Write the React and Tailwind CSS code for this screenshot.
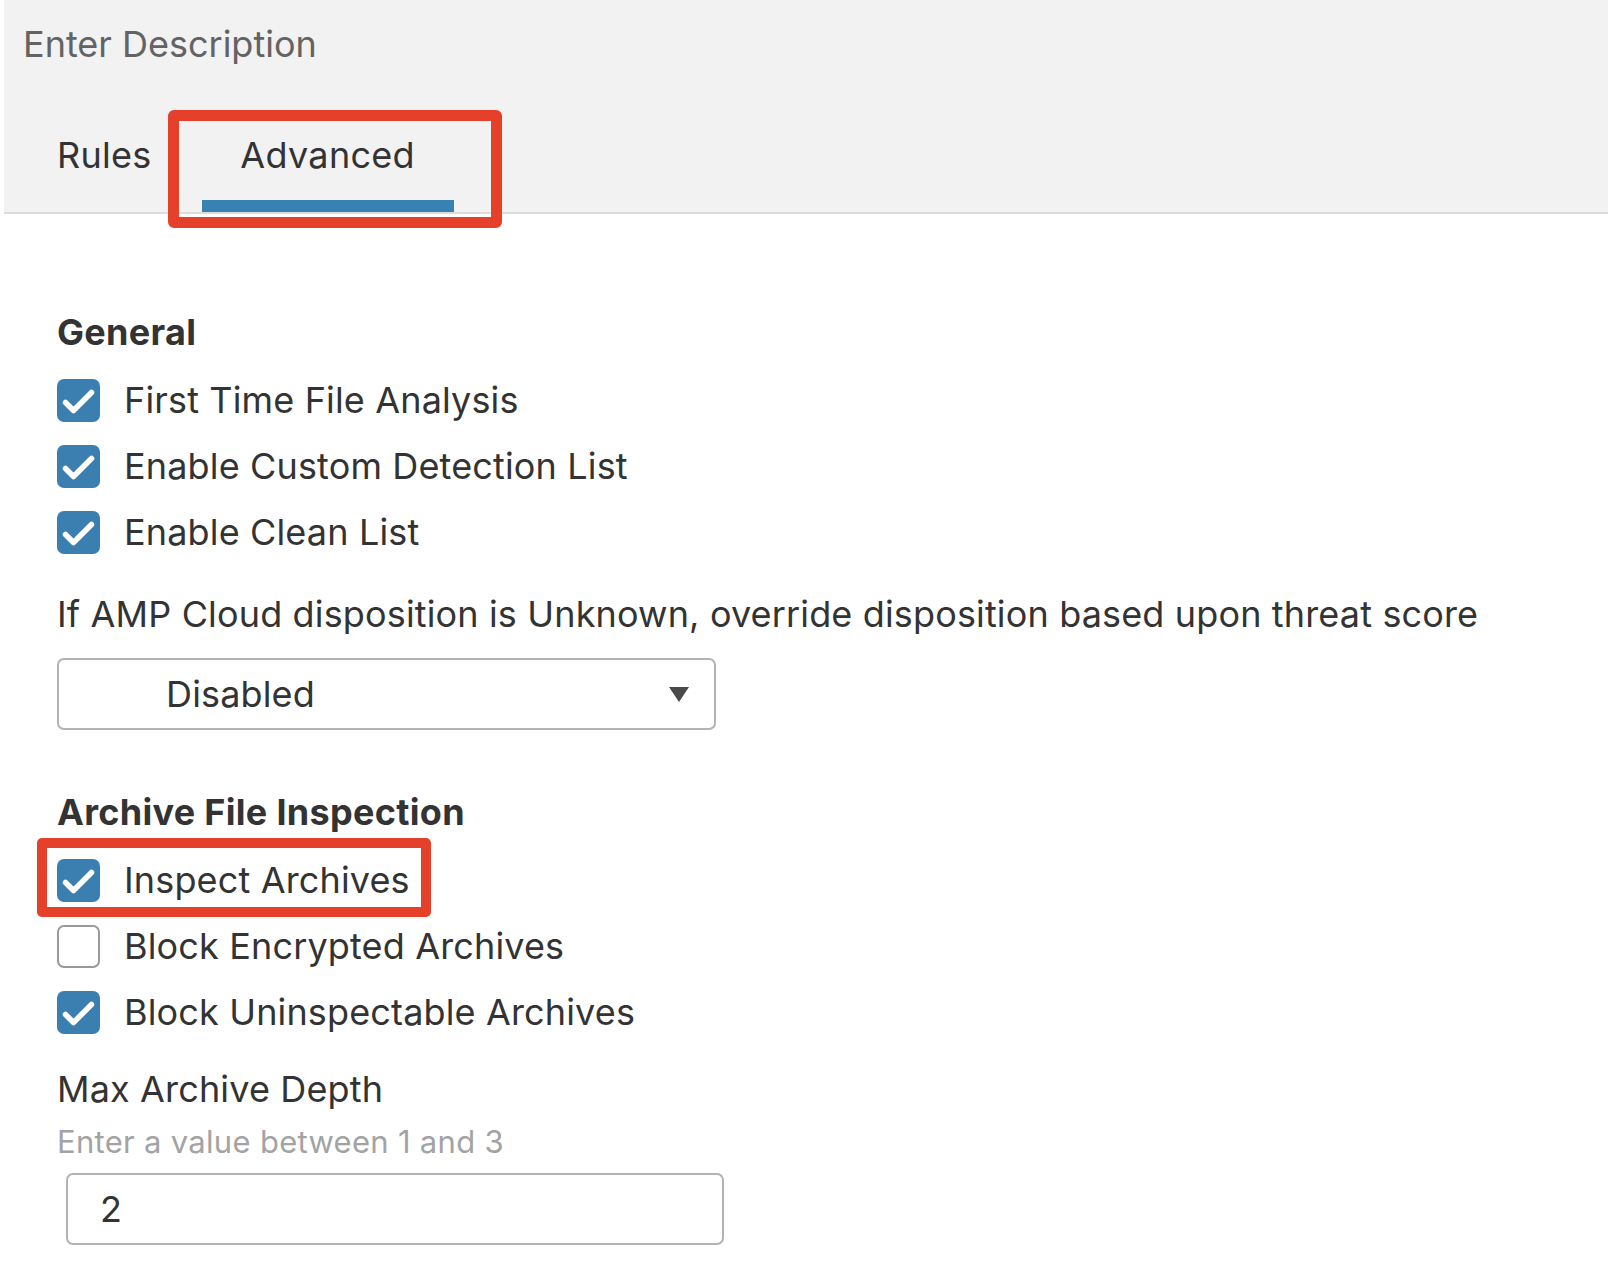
import { useState } from 'react';

function CheckBox({ checked }) {
  if (!checked) {
    return <div className="w-[43px] h-[43px] shrink-0 rounded-[7px] border-2 border-[#9a9a9a] bg-white" />;
  }
  return (
    <div className="w-[43px] h-[43px] shrink-0 rounded-[7px] bg-[#3a7fb0] flex items-center justify-center">
      <svg width="43" height="43" viewBox="0 0 43 43" fill="none">
        <path d="M8.5 23.5 L16.5 31.5 L34.5 13.5" stroke="white" strokeWidth="5.5" strokeLinecap="round" strokeLinejoin="round" />
      </svg>
    </div>
  );
}

function CheckRow({ label, checked, highlight }) {
  return (
    <div className="relative h-[66px] flex items-center gap-[24px]">
      <CheckBox checked={checked} />
      <span className="text-[36px] tracking-[0.15px] leading-[45px] text-[#333]">{label}</span>
      {highlight && (
        <div className="absolute left-[-20px] top-[-9px] w-[394px] h-[79px] border-[10px] border-[#e5402a] rounded-[5px] pointer-events-none" />
      )}
    </div>
  );
}

export default function App() {
  const [depth, setDepth] = useState('2');

  return (
    <div className="min-h-[1286px] bg-white font-['Inter','Liberation_Sans',sans-serif] antialiased">
      {/* Header */}
      <div className="ml-[4px] bg-[#f2f2f2] border-b-2 border-[#dcdcdc] h-[214px] pl-[19px] flex flex-col">
        <div className="mt-[22px] text-[36px] leading-[45px] text-[#636363]">Enter Description</div>
        <div className="mt-auto flex items-end pl-[34px]">
          <div className="pb-[34px] text-[36px] tracking-[0.3px] leading-[45px] text-[#333]">Rules</div>
          <div className="relative ml-[50px] w-[252px] flex flex-col items-center z-10">
            <div className="text-[36px] tracking-[0.3px] leading-[45px] text-[#333]">Advanced</div>
            <div className="mt-[22px] w-full h-[12px] bg-[#3882b3]" />
            <div className="absolute left-[-34px] top-[-23px] w-[334px] h-[118px] border-[11px] border-[#e5402a] rounded-[6px] pointer-events-none" />
          </div>
        </div>
      </div>

      {/* Content */}
      <div className="pl-[57px] pt-[96px]">
        <div className="text-[36px] tracking-[0.3px] leading-[45px] font-bold text-[#333] mb-[12px]">General</div>
        <CheckRow label="First Time File Analysis" checked />
        <CheckRow label="Enable Custom Detection List" checked />
        <CheckRow label="Enable Clean List" checked />

        <div className="mt-[27px] text-[36px] tracking-[0.15px] leading-[45px] text-[#333]">
          If AMP Cloud disposition is Unknown, override disposition based upon threat score
        </div>
        <div className="mt-[21px] w-[659px] h-[72px] rounded-[7px] border-2 border-[#b3b3b3] bg-white flex items-center pl-[107px] pr-[25px]">
          <span className="text-[36px] tracking-[0.15px] leading-[45px] text-[#333]">Disabled</span>
          <svg className="ml-auto" width="20" height="15" viewBox="0 0 20 15">
            <path d="M0 0 H20 L10 15 Z" fill="#4a4a4a" />
          </svg>
        </div>

        <div className="mt-[60px] text-[36px] tracking-[0.3px] leading-[45px] font-bold text-[#333] mb-[12px]">Archive File Inspection</div>
        <CheckRow label="Inspect Archives" checked highlight />
        <CheckRow label="Block Encrypted Archives" />
        <CheckRow label="Block Uninspectable Archives" checked />

        <div className="mt-[22px] text-[36px] tracking-[0.15px] leading-[45px] text-[#333]">Max Archive Depth</div>
        <div className="mt-[12px] text-[31px] tracking-[0.3px] leading-[36px] text-[#a3a3a3]">Enter a value between 1 and 3</div>
        <input
          value={depth}
          onChange={(e) => setDepth(e.target.value)}
          className="mt-[13px] ml-[9px] block w-[658px] h-[72px] rounded-[7px] border-2 border-[#b3b3b3] bg-white pl-[32px] text-[36px] text-[#333] outline-none"
        />
      </div>
    </div>
  );
}
